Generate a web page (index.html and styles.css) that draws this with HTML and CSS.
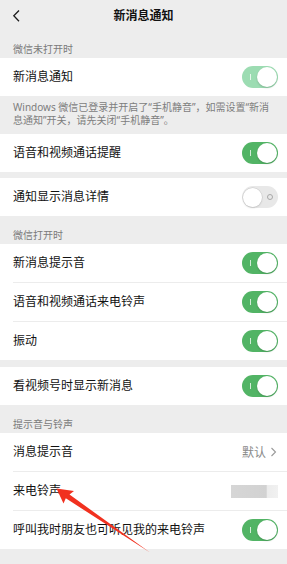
FILE: index.html
```html
<!DOCTYPE html>
<html lang="zh">
<head>
<meta charset="utf-8">
<title>新消息通知</title>
<link rel="stylesheet" href="styles.css">
</head>
<body>
<div class="page">
  <header class="topbar">
    <svg class="back" width="10" height="14" viewBox="0 0 10 14"><polyline points="7,1.5 1.8,6.8 7,12.2" fill="none" stroke="#1c1c1c" stroke-width="1.3"/></svg>
    <h1 class="title">新消息通知</h1>
  </header>

  <div class="label label-first">微信未打开时</div>
  <div class="group">
    <div class="row"><span class="text">新消息通知</span><span class="switch on dim"><span class="mark"></span><span class="knob"></span></span></div>
  </div>
  <p class="note">Windows 微信已登录并开启了“手机静音”，如需设置“新消<br>息通知”开关，请先关闭“手机静音”。</p>
  <div class="group">
    <div class="row"><span class="text">语音和视频通话提醒</span><span class="switch on"><span class="mark"></span><span class="knob"></span></span></div>
  </div>
  <div class="group gap">
    <div class="row"><span class="text">通知显示消息详情</span><span class="switch off"><span class="knob"></span><span class="ring"></span></span></div>
  </div>

  <div class="label">微信打开时</div>
  <div class="group">
    <div class="row"><span class="text">新消息提示音</span><span class="switch on"><span class="mark"></span><span class="knob"></span></span></div>
    <div class="row"><span class="text">语音和视频通话来电铃声</span><span class="switch on"><span class="mark"></span><span class="knob"></span></span></div>
    <div class="row"><span class="text">振动</span><span class="switch on"><span class="mark"></span><span class="knob"></span></span></div>
  </div>
  <div class="group gap2">
    <div class="row"><span class="text">看视频号时显示新消息</span><span class="switch on"><span class="mark"></span><span class="knob"></span></span></div>
  </div>

  <div class="label">提示音与铃声</div>
  <div class="group">
    <div class="row"><span class="text">消息提示音</span><span class="value">默认<svg class="chev" width="7" height="10" viewBox="0 0 7 10"><polyline points="1.5,1 5.5,5 1.5,9" fill="none" stroke="#9a9a9a" stroke-width="1.1"/></svg></span></div>
    <div class="row"><span class="text">来电铃声</span><span class="blur"></span></div>
    <div class="row"><span class="text">呼叫我时朋友也可听见我的来电铃声</span><span class="switch on"><span class="mark"></span><span class="knob"></span></span></div>
  </div>

  <svg class="arrow" width="287" height="564" viewBox="0 0 287 564"><polygon points="56.5,488.5 74,491 69.5,494.6 150,552.5 65.8,498.3 63.5,503.5" fill="#f1311f"/></svg>
</div>
</body>
</html>
```

FILE: styles.css
```css
html, body {
  margin: 0;
  padding: 0;
  background: #ededed;
}
body {
  font-family: "Noto Sans", "Noto Sans CJK SC", sans-serif;
  color: #111;
}
.page {
  position: relative;
  width: 287px;
  height: 564px;
  overflow: hidden;
  background: #ededed;
}
.topbar {
  height: 32px;
  display: flex;
  align-items: center;
  justify-content: center;
  position: relative;
}
.back {
  position: absolute;
  left: 12px;
  top: 9px;
}
.title {
  margin: 0;
  font-size: 12px;
  font-weight: 600;
  color: #111;
  line-height: 16px;
}
.label {
  height: 28px;
  box-sizing: border-box;
  display: flex;
  align-items: flex-end;
  padding: 0 0 2px 13px;
  font-size: 10px;
  line-height: 14px;
  color: #7b7b7b;
}
.label-first {
  height: 26px;
}
.group {
  background: #fff;
}
.group.gap {
  margin-top: 6px;
}
.group.gap2 {
  margin-top: 7px;
}
.row {
  height: 38px;
  margin-left: 13px;
  padding-right: 9px;
  display: flex;
  align-items: center;
  justify-content: space-between;
}
.row + .row {
  border-top: 1px solid #ececec;
}
.group:first-of-type .row {
  height: 39px;
}
.text {
  font-size: 12px;
  line-height: 16px;
  color: #111;
}
.note {
  margin: 0;
  padding: 5px 8px 7px 13px;
  font-size: 10px;
  line-height: 13px;
  color: #7d7d7d;
}
.switch {
  width: 36px;
  height: 22px;
  border-radius: 11px;
  box-sizing: border-box;
  display: flex;
  align-items: center;
  justify-content: space-between;
}
.switch.on {
  background: #52b465;
  padding: 0 1px 0 8px;
}
.switch.on.dim {
  background: #9cdcb2;
}
.switch .mark {
  width: 1px;
  height: 6px;
  background: rgba(255, 255, 255, 0.75);
}
.switch .knob {
  width: 20px;
  height: 20px;
  border-radius: 50%;
  background: #fff;
  box-shadow: 0 1px 2px rgba(0, 0, 0, 0.18);
}
.switch.off {
  background: #e8e8e8;
  padding: 0 5px 0 1px;
}
.switch.off .knob {
  width: 19px;
  height: 19px;
  box-shadow: 0 0 0 0.5px #c8c8c8, 0 1px 2px rgba(0, 0, 0, 0.15);
}
.switch .ring {
  width: 4px;
  height: 4px;
  border: 1px solid #a8a8a8;
  border-radius: 50%;
}
.value {
  display: flex;
  align-items: center;
  gap: 4px;
  font-size: 12px;
  color: #8a8a8a;
  padding-right: 1px;
}
.blur {
  width: 47px;
  height: 13px;
  background: linear-gradient(90deg, #d6d6d6 0%, #d2d2d2 75%, #ececec 77%, #f1f1f1 100%);
  filter: blur(0.6px);
}
.arrow {
  position: absolute;
  left: 0;
  top: 0;
  pointer-events: none;
}
```
